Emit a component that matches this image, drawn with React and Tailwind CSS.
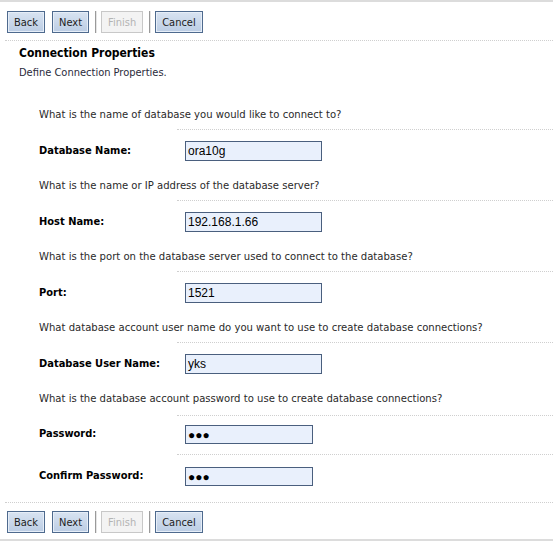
import React from "react";

const font = { fontFamily: "Tahoma, 'DejaVu Sans Condensed', 'DejaVu Sans', sans-serif" };

function Btn({ children, disabled }) {
  return (
    <button
      className={
        disabled
          ? "h-[22px] px-[6px] border border-[#c8c8c8] bg-[#f3f3f3] text-[#b4b4b4] text-[11px] leading-none"
          : "h-[22px] px-[6px] border border-[#4e6a8e] bg-gradient-to-b from-[#d8e3f1] to-[#bccde4] text-[#1c1c1c] text-[11px] leading-none shadow-[inset_0_0_0_1px_#e6eef8]"
      }
    >
      {children}
    </button>
  );
}

function Sep() {
  return <div className="w-px h-[22px] bg-[#9a9a9a] border-r border-[#e5e5e5] box-content" />;
}

function Toolbar() {
  return (
    <div className="flex items-center pl-[7px] h-[22px]">
      <Btn>Back</Btn>
      <div className="w-[7px]" />
      <Btn>Next</Btn>
      <div className="w-[6px]" />
      <Sep />
      <div className="w-[4px]" />
      <Btn disabled>Finish</Btn>
      <div className="w-[6px]" />
      <Sep />
      <div className="w-[4px]" />
      <Btn>Cancel</Btn>
    </div>
  );
}

function Field({ label, value, password, w, h }) {
  return (
    <div className="flex items-center">
      <div className="w-[138px] pl-[39px] box-content text-[11px] font-bold text-black">{label}</div>
      <div className="pl-[8px] flex-1">
        <div
          className={`${w} ${h} border border-[#4a5f7e] bg-[#e9f0fc] flex items-center px-[2px] text-[12px] text-black`}
          style={{ fontFamily: "'Liberation Sans', Arial, sans-serif" }}
        >
          {password ? <span className="text-[12px] font-bold">●●●</span> : value}
        </div>
      </div>
    </div>
  );
}

const groups = [
  { q: "What is the name of database you would like to connect to?", label: "Database Name:", value: "ora10g" },
  { q: "What is the name or IP address of the database server?", label: "Host Name:", value: "192.168.1.66" },
  { q: "What is the port on the database server used to connect to the database?", label: "Port:", value: "1521" },
  { q: "What database account user name do you want to use to create database connections?", label: "Database User Name:", value: "yks" },
];

export default function App() {
  return (
    <div className="w-[553px] h-[542px] bg-white text-[#222] overflow-hidden" style={font}>
      <div className="border-t-2 border-[#dcdcdc] pt-[9px]">
        <Toolbar />
        <div className="ml-[5px] mt-[7px] border-b border-dotted border-[#cfcfcf]" />
      </div>

      <div className="pl-[19px] pt-[4px]">
        <div className="text-[12px] leading-[16px] font-bold text-black">Connection Properties</div>
        <div className="text-[11px] leading-[16px] mt-[4px] text-[#2a2a3a]">Define Connection Properties.</div>
      </div>

      <div className="mt-[26px]">
        {groups.map((g) => (
          <div key={g.label} className="pb-[17px]">
            <div className="pl-[39px] text-[11.2px] leading-[16px] text-[#2a2a2a]">{g.q}</div>
            <div className="ml-[177px] mt-[6px] border-t border-dotted border-[#cfcfcf] h-[12px]" />
            <Field label={g.label} value={g.value} w="w-[137px]" h="h-[20px]" />
          </div>
        ))}
        <div>
          <div className="pl-[39px] text-[11.2px] leading-[16px] text-[#2a2a2a]">
            What is the database account password to use to create database connections?
          </div>
          <div className="ml-[177px] mt-[8px] border-t border-dotted border-[#cfcfcf] h-[10px]" />
          <Field label="Password:" password w="w-[128px]" h="h-[19px]" />
          <div className="ml-[177px] mt-[10px] border-t border-dotted border-[#cfcfcf] h-[13px]" />
          <Field label="Confirm Password:" password w="w-[128px]" h="h-[19px]" />
        </div>
      </div>

      <div className="mt-[16px] ml-[5px] border-t border-dotted border-[#cfcfcf]" />
      <div className="pt-[8px]">
        <Toolbar />
      </div>
      <div className="mt-[6px] border-b-2 border-[#dcdcdc]" />
    </div>
  );
}
